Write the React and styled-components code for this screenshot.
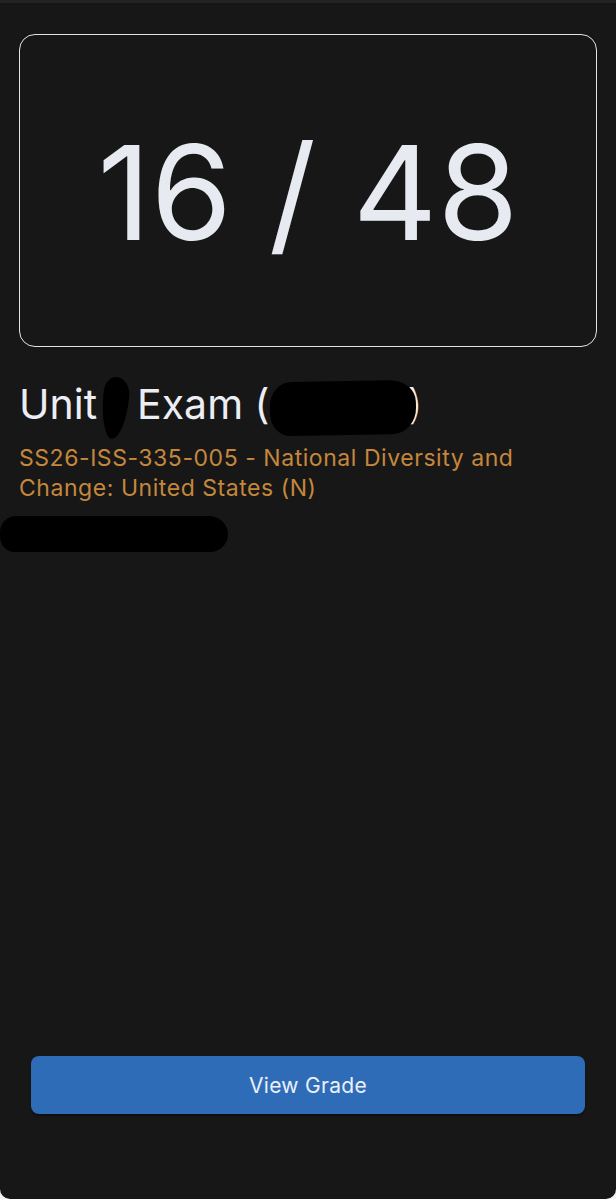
import React from 'react';
import styled, { createGlobalStyle } from 'styled-components';

const GlobalStyle = createGlobalStyle`
  html, body {
    margin: 0;
    padding: 0;
    background: #f2f2f2;
  }
  * {
    box-sizing: border-box;
  }
`;

const Screen = styled.div`
  height: 1199px;
  display: flex;
  flex-direction: column;
  padding: 31px 19px 85px;
  background: #171717;
  border-top: 3px solid #232325;
  border-radius: 0 0 10px 10px;
  font-family: Inter, "Liberation Sans", sans-serif;
  color: #e8eaf0;
`;

const ScoreCard = styled.div`
  height: 313px;
  border: 1.5px solid #e4e4e6;
  border-radius: 16px;
  display: flex;
  align-items: center;
  justify-content: center;
`;

const Score = styled.div`
  font-size: 131px;
  line-height: 1;
  font-weight: 400;
  color: #e8eaf2;
  padding-top: 3px;
`;

const Title = styled.h1`
  margin: 30px 0 0;
  font-size: 41px;
  font-weight: 400;
  line-height: 48px;
  color: #eceef4;
`;

const Course = styled.p`
  margin: 4px 0 0;
  font-size: 23px;
  letter-spacing: 0.55px;
  line-height: 30px;
  color: #c5873c;
`;

// black marker scribble over redacted bits
const Redacted = styled.span`
  display: inline-block;
  vertical-align: middle;
  background: #000;
  width: ${p => p.$w}px;
  height: ${p => p.$h}px;
  margin: ${p => p.$m || '0'};
  border-radius: ${p => p.$r || '22px 26px 24px 20px / 24px 22px 26px 22px'};
  transform: rotate(${p => p.$rot || 0}deg);
`;

const HiddenLine = styled.div`
  margin: 13px 0 0 -19px;
  line-height: 0;
`;

const Spacer = styled.div`
  flex: 1;
`;

const Button = styled.button`
  margin: 0 12px;
  height: 58px;
  border: none;
  border-radius: 8px;
  background: #2f6cb8;
  color: #eaf0f8;
  font-family: Inter, "Liberation Sans", sans-serif;
  font-size: 21px;
  letter-spacing: 0.3px;
  font-weight: 400;
  box-shadow: 0 2px 2px rgba(0, 0, 0, 0.4);
`;

export default function App() {
  return (
    <>
      <GlobalStyle />
      <Screen>
        <ScoreCard>
          <Score>16 / 48</Score>
        </ScoreCard>
        <Title>
          Unit<Redacted aria-hidden $w={26} $h={62} $m="0 9px 0 5px" $rot={6} $r="45% 55% 50% 50% / 25% 30% 70% 75%" />Exam (<Redacted aria-hidden $w={146} $h={54} $m="0 -8px 0 0" $rot={-1} />)
        </Title>
        <Course>SS26-ISS-335-005 - National Diversity and Change: United States (N)</Course>
        <HiddenLine>
          <Redacted aria-hidden $w={228} $h={36} $r="16px 20px 18px 14px / 16px 18px 18px 16px" />
        </HiddenLine>
        <Spacer />
        <Button>View Grade</Button>
      </Screen>
    </>
  );
}
